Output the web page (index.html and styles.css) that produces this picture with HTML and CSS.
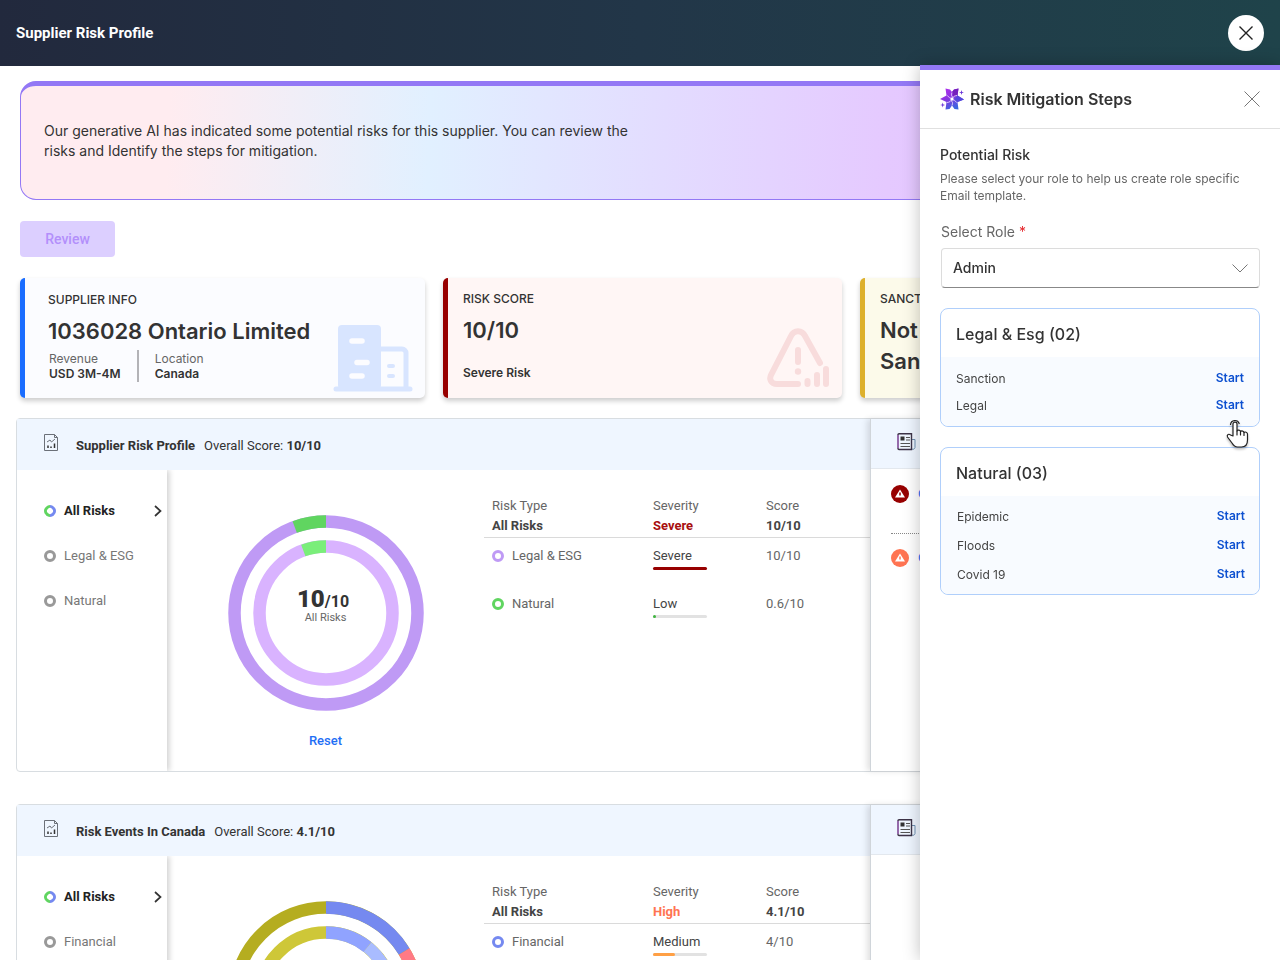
FILE: index.html
```
<!DOCTYPE html>
<html lang="en">

<head>
  <meta charset="UTF-8">
  <meta name="viewport" content="width=device-width, initial-scale=1.0">
  <title>Supplier Risk Profile</title>
  <link rel="stylesheet" href="styles.css">
</head>

<body>
  <header class="topbar">
    <h1>Supplier Risk Profile</h1>
    <button class="round-close" type="button" aria-label="Close">
      <svg width="14" height="14" viewBox="0 0 14 14"><path d="M.500.500l13 13M13.500.500l-13 13" stroke="#222" stroke-width="1.400" fill="none"/></svg>
    </button>
  </header>

  <main>
    <section class="banner">
      <p>Our generative AI has indicated some potential risks for this supplier. You can review the risks and Identify the steps for mitigation.</p>
    </section>
    <button class="review" type="button" disabled>Review</button>

    <section class="cards">
      <article class="card info">
        <h2>Supplier Info</h2>
        <p class="big">1036028 Ontario Limited</p>
        <dl>
          <div>
            <dt>Revenue</dt>
            <dd>USD 3M-4M</dd>
          </div>
          <div>
            <dt>Location</dt>
            <dd>Canada</dd>
          </div>
        </dl>
        <svg class="art" width="80" height="68" viewBox="0 0 80 68">
          <rect x="5" y="1" width="43" height="64" rx="4" fill="#d8e5ff"/>
          <path d="M46 25h23a4 4 0 0 1 4 4v36" fill="none" stroke="#d8e5ff" stroke-width="5"/>
          <path d="M3 65h74" stroke="#d8e5ff" stroke-width="5" stroke-linecap="round"/>
          <path d="M19 17h10M24 38.500h10M19 52h10" stroke="#fcfcff" stroke-width="5.500" stroke-linecap="round"/>
          <path d="M56 42h4M56 52h4" stroke="#d8e5ff" stroke-width="4" stroke-linecap="round"/>
        </svg>
      </article>
      <article class="card score">
        <h2>Risk Score</h2>
        <p class="big">10/10</p>
        <p class="level">Severe Risk</p>
        <svg class="art" width="62" height="60" viewBox="0 0 62 60" fill="none" stroke="#f8dcdc" stroke-width="6" stroke-linecap="round">
          <path d="M31 56H10c-6 0-8.500-5-5.500-10L24 8c3-6.500 11-6.500 14 0l15 27"/>
          <path d="M31 22v12M40.500 53v3M50 47v9M59 41v15"/>
          <circle cx="31" cy="43.500" r="3.200" fill="#f8dcdc" stroke="none"/>
        </svg>
      </article>
      <article class="card sanctions">
        <h2>Sanctions</h2>
        <p class="big">Not<br>Sanctioned</p>
      </article>
    </section>

    <section class="panel">
      <div class="profile">
        <header class="panel-head">
          <svg class="report" width="14" height="17" viewBox="0 0 14 17" fill="none" stroke="#6b7078">
            <path d="M.500.500H10.500L13.500 3.500V16.500H.500zM10.500.500V3.500H13.500"/>
            <path d="M3 8l3-2 1.500 2L11 5"/>
            <path d="M4 11.500V14M7 12.500V14M10.500 9.500V14" stroke="#333" stroke-width="1.500"/>
          </svg>
          <h2>Supplier Risk Profile</h2>
          <p>Overall Score: <b>10/10</b></p>
        </header>
        <div class="panel-body">
          <nav>
            <a class="active" href="#all"><i class="ring multi"></i>All Risks
              <svg width="8" height="12" viewBox="0 0 8 12"><path d="M1 1l5.500 5L1 11" fill="none" stroke="#333" stroke-width="1.700"/></svg>
            </a>
            <a href="#legal"><i class="ring"></i>Legal &amp; ESG</a>
            <a href="#natural"><i class="ring"></i>Natural</a>
          </nav>
          <div class="chart">
            <svg width="196" height="196" viewBox="0 0 196 196" fill="none" stroke-width="12.500">
              <circle cx="98" cy="98" r="91.500" stroke="#bf9af5"/>
              <path d="M66.700 12A91.500 91.500 0 0 1 98 6.500" stroke="#60d560"/>
              <circle cx="98" cy="98" r="66.500" stroke="#d9b3ff"/>
              <path d="M75.300 35.500A66.500 66.500 0 0 1 98 31.500" stroke="#7aee7a"/>
            </svg>
            <div class="total">
              <p><b>10</b>/10</p>
              <small>All Risks</small>
            </div>
            <button class="reset" type="button">Reset</button>
          </div>
          <table>
            <thead>
              <tr><th>Risk Type</th><th>Severity</th><th>Score</th></tr>
              <tr class="sum"><td>All Risks</td><td class="severe">Severe</td><td>10/10</td></tr>
            </thead>
            <tbody>
              <tr>
                <td><i class="ring purple"></i>Legal &amp; ESG</td>
                <td class="dark">Severe<span class="bar"><span class="fill-severe" style="width: 100%"></span></span></td>
                <td>10/10</td>
              </tr>
              <tr>
                <td><i class="ring green"></i>Natural</td>
                <td class="dark">Low<span class="bar"><span class="fill-low" style="width: 6%"></span></span></td>
                <td>0.6/10</td>
              </tr>
            </tbody>
          </table>
        </div>
      </div>
      <aside class="news">
        <header class="news-head">
          <svg width="19" height="18" viewBox="0 0 19 18" fill="none">
            <path d="M15 6.500h3V14.500a2 2 0 0 1-3 1.500" stroke="#6c8fb0"/>
            <path d="M2 .800H14.500V16.500H2A1 1 0 0 1 1 15.500V1.800A1 1 0 0 1 2 .800z" stroke="#3d3347" stroke-width="1.400"/>
            <path d="M1 2V15" stroke="#a66bbf" stroke-width="1.400"/>
            <path d="M3.500 3.500h4v4h-4z" fill="#333"/>
            <path d="M9 4.500h4M9 7h4M3.500 10.500H13M3.500 13.500H13" stroke="#555"/>
          </svg>
        </header>
        <ul>
          <li>
            <svg width="18" height="18" viewBox="0 0 18 18"><circle cx="9" cy="9" r="9" fill="#970000"/><path d="M9 4.500l5 8H4z" fill="#fff"/><path d="M9 7.500v3" stroke="#970000" stroke-width="1.500"/></svg>
            <a href="#news">Ontario</a>
          </li>
          <li>
            <svg width="18" height="18" viewBox="0 0 18 18"><circle cx="9" cy="9" r="9" fill="#ff7452"/><path d="M9 4.500l5 8H4z" fill="#fff"/><path d="M9 7.500v3" stroke="#ff7452" stroke-width="1.500"/></svg>
            <a href="#news">Ontario</a>
          </li>
        </ul>
      </aside>
    </section>

    <section class="panel">
      <div class="profile">
        <header class="panel-head">
          <svg class="report" width="14" height="17" viewBox="0 0 14 17" fill="none" stroke="#6b7078">
            <path d="M.500.500H10.500L13.500 3.500V16.500H.500zM10.500.500V3.500H13.500"/>
            <path d="M3 8l3-2 1.500 2L11 5"/>
            <path d="M4 11.500V14M7 12.500V14M10.500 9.500V14" stroke="#333" stroke-width="1.500"/>
          </svg>
          <h2>Risk Events In Canada</h2>
          <p>Overall Score: <b>4.1/10</b></p>
        </header>
        <div class="panel-body">
          <nav>
            <a class="active" href="#all-events"><i class="ring multi"></i>All Risks
              <svg width="8" height="12" viewBox="0 0 8 12"><path d="M1 1l5.500 5L1 11" fill="none" stroke="#333" stroke-width="1.700"/></svg>
            </a>
            <a href="#financial"><i class="ring"></i>Financial</a>
          </nav>
          <div class="chart">
            <svg width="196" height="196" viewBox="0 0 196 196" fill="none" stroke-width="12.500">
              <circle cx="98" cy="98" r="91.500" stroke="#b5ad20"/>
              <path d="M98 6.500A91.500 91.500 0 0 1 176.200 50.500" stroke="#7589f0"/>
              <path d="M176.200 50.500A91.500 91.500 0 0 1 177 144" stroke="#ff7a85"/>
              <circle cx="98" cy="98" r="66.500" stroke="#cec738"/>
              <path d="M98 31.500A66.500 66.500 0 0 1 139.500 46" stroke="#90a3ff"/>
              <path d="M139.500 46A66.500 66.500 0 0 1 155 64" stroke="#a9bcff"/>
            </svg>
          </div>
          <table>
            <thead>
              <tr><th>Risk Type</th><th>Severity</th><th>Score</th></tr>
              <tr class="sum"><td>All Risks</td><td class="high">High</td><td>4.1/10</td></tr>
            </thead>
            <tbody>
              <tr>
                <td><i class="ring blue"></i>Financial</td>
                <td class="dark">Medium<span class="bar"><span class="fill-medium" style="width: 40%"></span></span></td>
                <td>4/10</td>
              </tr>
            </tbody>
          </table>
        </div>
      </div>
      <aside class="news">
        <header class="news-head">
          <svg width="19" height="18" viewBox="0 0 19 18" fill="none">
            <path d="M15 6.500h3V14.500a2 2 0 0 1-3 1.500" stroke="#6c8fb0"/>
            <path d="M2 .800H14.500V16.500H2A1 1 0 0 1 1 15.500V1.800A1 1 0 0 1 2 .800z" stroke="#3d3347" stroke-width="1.400"/>
            <path d="M1 2V15" stroke="#a66bbf" stroke-width="1.400"/>
            <path d="M3.500 3.500h4v4h-4z" fill="#333"/>
            <path d="M9 4.500h4M9 7h4M3.500 10.500H13M3.500 13.500H13" stroke="#555"/>
          </svg>
        </header>
      </aside>
    </section>
  </main>

  <!-- mitigation drawer -->
  <aside class="drawer">
    <header class="drawer-head">
      <svg width="24" height="24" viewBox="0 0 24 24">
        <defs>
          <linearGradient id="star" x1="0" y1="0" x2=".5" y2="1">
            <stop offset="0" stop-color="#b52ef0"/>
            <stop offset=".5" stop-color="#8a35e0"/>
            <stop offset="1" stop-color="#3a66e0"/>
          </linearGradient>
        </defs>
        <path d="M5.500 1.500L10 2.500 12 5 14 2.500 18.500 1.500 17.500 8.500 24 12.500 17.500 15 18.500 22.500 14.500 22 12 18.500 9.500 22 5.500 22.500 6.500 15 0 12 6.500 8.500z" fill="url(#star)"/>
        <path d="M18.500 1.500l-1 7L13.500 10 12 5l2-2.500z" fill="#7420bc"/>
        <path d="M24 12.500L17.500 15 14 13l3.500-4.500z" fill="#5546dc"/>
        <path d="M12 5.500c-1 2.500-.5 4 1 5M17 8.500c-2.500.200-4 1.200-4.200 2.800M16.500 15.500c-1.200-2-2.500-2.600-4-2.600M12 18.500c1-2.500.5-4-1-5M7 15.500c2.500-.200 4-1.200 4.200-2.800M7.500 8.500c1.200 2 2.500 2.600 4 2.600" fill="none" stroke="#f3e2ff" stroke-width=".8"/>
        <circle cx="12" cy="12" r="1.600" fill="#fff"/>
        <path d="M21.500 3l.6 1.900 1.900.6-1.900.6-.6 1.900-.6-1.900-1.900-.6 1.900-.6zM2.700 15.500l.6 1.900 1.900.6-1.900.6-.6 1.900-.6-1.900-1.900-.6 1.900-.6z" fill="#6b35d8"/>
      </svg>
      <h2>Risk Mitigation Steps</h2>
      <button type="button" aria-label="Close panel">
        <svg width="16" height="16" viewBox="0 0 16 16"><path d="M.500.500l15 15M15.500.500l-15 15" stroke="#777" fill="none"/></svg>
      </button>
    </header>
    <div class="drawer-body">
      <h3>Potential Risk</h3>
      <p class="hint">Please select your role to help us create role specific Email template.</p>
      <label for="role">Select Role <span>*</span></label>
      <div class="select">
        <select id="role">
          <option>Admin</option>
        </select>
        <svg width="16" height="9" viewBox="0 0 16 9"><path d="M.500.500L8 8l7.500-7.500" stroke="#777" fill="none"/></svg>
      </div>

      <section class="group">
        <h3>Legal &amp; Esg (02)</h3>
        <ul>
          <li>Sanction <a href="#sanction">Start</a></li>
          <li>Legal <a href="#legal-start">Start</a></li>
        </ul>
        <svg class="pointer" width="24" height="30" viewBox="0 0 24 30">
          <path d="M4.500 5.500a4.500 4.500 0 0 1 8.700-1" fill="none" stroke="#222" stroke-width="1.200" stroke-linecap="round"/>
          <path d="M7 17V5c0-2.500 4-2.500 4 0v7c.5-1.500 3.500-1 3.500.500 1-1 3.500-.500 3.500 1 1-1 3.500-.300 3.500 1.500v6c0 4-2 7-6 7h-4c-2.500 0-4-1.500-5.500-4L1.500 18c-1-2.500 1.500-3.500 3-2z" fill="#fff" stroke="#222" stroke-width="1.200" stroke-linejoin="round"/>
          <path d="M11 12v4M14.500 12.500v3.500M18 13.500v3" stroke="#222" stroke-width="1.200" stroke-linecap="round"/>
        </svg>
      </section>

      <section class="group natural">
        <h3>Natural (03)</h3>
        <ul>
          <li>Epidemic <a href="#epidemic">Start</a></li>
          <li>Floods <a href="#floods">Start</a></li>
          <li>Covid 19 <a href="#covid">Start</a></li>
        </ul>
      </section>
    </div>
  </aside>
</body>

</html>
```
FILE: styles.css
```
* {
  box-sizing: border-box;
}

body {
  display: flex;
  flex-direction: column;
  margin: 0;
  height: 100vh;
  overflow: hidden;
  font-family: Inter, "Liberation Sans", sans-serif;
  color: #333;
  background: #fff;
}

h1, h2, h3, p, ul, dl, dd {
  margin: 0;
  padding: 0;
}

ul {
  list-style: none;
}

a {
  text-decoration: none;
}

button {
  padding: 0;
  border: 0;
  background: none;
  font-family: inherit;
  cursor: pointer;
}

svg {
  display: block;
  flex: none;
}

/* top bar */
.topbar {
  display: flex;
  flex: none;
  align-items: center;
  justify-content: space-between;
  height: 66px;
  padding: 0 16px;
  background: linear-gradient(90deg, #22293d, #223648 50%, #1f434a);
}

.topbar h1 {
  font: 700 15px/20px Roboto, sans-serif;
  color: #fff;
}

.round-close {
  display: grid;
  place-items: center;
  width: 36px;
  height: 36px;
  border-radius: 50%;
  background: #fff;
}

/* page */
main {
  flex: 1;
  min-height: 0;
  overflow: hidden;
  padding: 15px 16px;
}

.banner {
  margin: 0 4px;
  padding: 35px 23px 38px;
  border: 1px solid #9378f5;
  border-top-width: 5px;
  border-radius: 16px;
  background: linear-gradient(92deg, #ffecf0 12%, #e1f0ff 33%, #e5c9ff 70%, #dcb8ff);
}

.banner p {
  max-width: 600px;
  font-size: 14px;
  line-height: 20px;
}

.review {
  width: 95px;
  height: 36px;
  margin: 21px 4px 21px;
  border-radius: 4px;
  background: #dccfff;
  color: #b38ffb;
  font: 500 14px Roboto, sans-serif;
}

/* cards */
.cards {
  display: grid;
  grid-template-columns: 405fr 399fr 400fr;
  gap: 18px;
  margin: 0 4px 20px;
}

.card {
  position: relative;
  height: 120px;
  padding: 12px 15px;
  border-left: 5px solid;
  border-radius: 5px;
  box-shadow: 0 3px 5px rgba(0, 0, 0, .2);
}

.card h2 {
  font-size: 12px;
  line-height: 18px;
  font-weight: 500;
  text-transform: uppercase;
  color: #333;
}

.card .big {
  margin-top: 7px;
  font-size: 22px;
  line-height: 31px;
  font-weight: 600;
  color: #333;
}

.info {
  padding: 13px 23px;
  border-color: #1a6dff;
  background: #fbfcff;
}

.score {
  border-color: #970000;
  background: #fff6f5;
}

.sanctions {
  border-color: #ddb02c;
  background: #fcfaea;
}

.card dl {
  display: flex;
  margin-top: 3px;
  font-size: 12px;
  line-height: 15px;
}

.card dl div {
  padding: 1px 16px;
}

.card dl div:first-child {
  padding-left: 1px;
  border-right: 2px solid #b3b3b7;
}

.card dt {
  color: #666;
}

.card dd {
  font-weight: 600;
}

.level {
  margin-top: 18px;
  font-size: 12px;
  line-height: 18px;
  font-weight: 600;
}

.art {
  position: absolute;
  right: 12px;
  bottom: 6px;
}

.score .art {
  right: 13px;
  bottom: 10px;
}

/* panels */
.panel {
  display: grid;
  grid-template-columns: 1fr 393px;
  margin-bottom: 32px;
  border: 1px solid #d8dde1;
  border-radius: 4px;
  font-family: Roboto, sans-serif;
  font-size: 13px;
  line-height: 20px;
}

.panel-head {
  display: flex;
  align-items: center;
  height: 51px;
  padding: 2px 27px 0;
  background: #eff6ff;
}

.report {
  margin: 0 18px 7px 0;
}

.panel-head h2 {
  margin-right: 9px;
  font-size: 13px;
  font-weight: 700;
}

.panel-body {
  display: grid;
  grid-template-columns: 150px 317px 1fr;
  height: 301px;
}

nav {
  padding-top: 18px;
  box-shadow: 2px 0 6px rgba(0, 0, 0, .2);
  clip-path: inset(0 -8px 0 0);
}

nav a {
  display: flex;
  align-items: center;
  height: 45px;
  padding: 0 5px 0 27px;
  color: #777;
}

nav a.active {
  color: #222;
  font-weight: 700;
}

nav a svg {
  margin-left: auto;
}

.ring {
  display: inline-block;
  width: 12px;
  height: 12px;
  margin-right: 8px;
  border: 3px solid #999;
  border-radius: 50%;
  vertical-align: -2px;
}

.ring.multi {
  border-color: #7589f0 #7589f0 #60d560 #60d560;
  transform: rotate(45deg);
}

.ring.purple {
  border-color: #bf9af5;
}

.ring.green {
  border-color: #60d560;
}

.ring.blue {
  border-color: #7589f0;
}

.chart {
  display: grid;
  grid-template-rows: 196px 20px;
  row-gap: 20px;
  justify-items: center;
  padding-top: 45px;
}

.chart > svg,
.total {
  grid-area: 1 / 1;
}

.total {
  padding-top: 72px;
  text-align: center;
}

.total p {
  margin-right: 5px;
  font-size: 16px;
  line-height: 24px;
  font-weight: 700;
}

.total b {
  font-size: 24px;
}

.total small {
  display: block;
  font-size: 11px;
  line-height: 8px;
  color: #666;
}

.reset {
  color: #1f6ff5;
  font: 500 13px/20px Roboto, sans-serif;
}

table {
  align-self: start;
  width: 100%;
  margin-top: 26px;
  border-collapse: collapse;
  table-layout: fixed;
}

th, td {
  padding: 0;
  text-align: left;
  vertical-align: top;
  color: #666;
}

th {
  font-weight: 400;
}

th:first-child {
  width: 169px;
}

th:nth-child(2) {
  width: 113px;
}

th:first-child,
td:first-child {
  padding-left: 8px;
}

.sum td {
  padding-bottom: 1px;
  border-bottom: 1px solid #dadada;
  font-weight: 700;
  color: #444;
}

.sum .severe {
  color: #a80f0f;
}

.sum .high {
  color: #ff7452;
}

tbody td {
  height: 48px;
  padding-top: 8px;
}

td.dark {
  color: #444;
}

.bar {
  display: block;
  width: 54px;
  height: 3px;
  margin-top: 1px;
  border-radius: 2px;
  background: #e2e2e2;
}

.bar span {
  display: block;
  height: 3px;
  border-radius: 2px;
}

.fill-severe {
  background: #970000;
}

.fill-low {
  background: #3fb53f;
}

.fill-medium {
  background: #ffa045;
}

.news {
  border-left: 1px solid #d0d5da;
  box-shadow: -3px 0 6px rgba(0, 0, 0, .12);
}

.news-head {
  height: 50px;
  padding: 14px 26px;
  border-bottom: 1px solid #e3e8ee;
  background: #eff6ff;
}

.news li {
  display: flex;
  align-items: center;
  gap: 9px;
  height: 64px;
  margin-left: 20px;
}

.news li:first-child {
  height: 65px;
  padding-bottom: 14px;
  border-bottom: 1px dotted #888;
}

.news li:last-child {
  height: 48px;
}

.news a {
  color: #1f6ff5;
}

/* drawer */
.drawer {
  position: fixed;
  top: 65px;
  right: 0;
  bottom: 0;
  width: 360px;
  border-top: 5px solid #9378f5;
  background: #fff;
  box-shadow: 0 0 16px rgba(0, 0, 0, .25);
}

.drawer-head {
  display: flex;
  align-items: center;
  height: 59px;
  padding: 0 20px;
  border-bottom: 1px solid #e0e0e0;
}

.drawer-head h2 {
  margin: 0 auto 0 6px;
  font-size: 16px;
  font-weight: 600;
}

.drawer-body {
  padding: 16px 20px;
}

.drawer-body > h3 {
  font-size: 14px;
  line-height: 20px;
  font-weight: 500;
}

.hint {
  margin-top: 5px;
  font-size: 12px;
  line-height: 17px;
  color: #666;
}

label {
  display: block;
  margin: 18px 0 6px 1px;
  font-size: 14px;
  line-height: 20px;
  color: #666;
}

label span {
  color: #e5262c;
}

.select {
  display: grid;
  align-items: center;
  margin: 0 0 20px 1px;
}

.select select {
  grid-area: 1 / 1;
  appearance: none;
  height: 40px;
  padding: 0 11px 2px;
  border: 1px solid #dcdcdc;
  border-bottom-color: #888;
  border-radius: 4px;
  background: #fff;
  color: #333;
  font: 500 14px Inter, sans-serif;
}

.select svg {
  grid-area: 1 / 1;
  justify-self: end;
  margin-right: 12px;
  pointer-events: none;
}

.group {
  position: relative;
  margin-bottom: 20px;
  border: 1px solid #b0cffb;
  border-radius: 8px;
}

.group h3 {
  padding: 15px 15px 13px;
  font-size: 16px;
  line-height: 20px;
  font-weight: 500;
}

.group ul {
  padding: 8px 15px 7px;
  border-radius: 0 0 8px 8px;
  background: #f8fbff;
}

.group li {
  display: flex;
  align-items: center;
  justify-content: space-between;
  height: 27px;
  font-size: 12px;
  color: #444;
}

.natural li {
  height: 29px;
}

.natural ul {
  padding: 6px 14px 5px 16px;
}

.group a {
  padding-bottom: 2px;
  font-weight: 600;
  color: #0d50d0;
}

.pointer {
  position: absolute;
  right: 9px;
  bottom: -23px;
  z-index: 1;
  filter: drop-shadow(0 2px 1px rgba(0, 0, 0, .25));
}
```
